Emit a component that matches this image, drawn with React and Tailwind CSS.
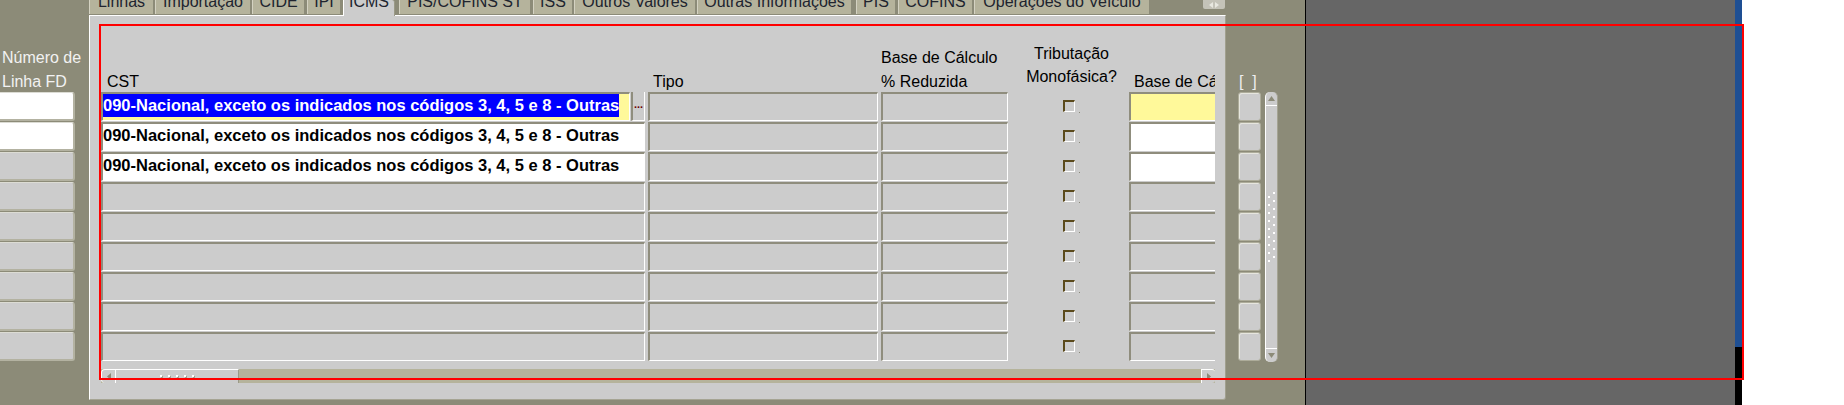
import React from 'react';

// Oracle Forms style ICMS tab, frozen as a screenshot

const tabs = [
  { label: 'Linhas', cls: 'w-[64px]' },
  { label: 'Importação', cls: 'w-[95px] ml-[2px]' },
  { label: 'CIDE', cls: 'w-[52px] ml-[2px]' },
  { label: 'IPI', cls: 'w-[33px] ml-[3px]' },
  { label: 'ICMS', cls: 'w-[52px] ml-[3px]', active: true },
  { label: 'PIS/COFINS ST', cls: 'w-[131px] ml-[4px]' },
  { label: 'ISS', cls: 'w-[39px] ml-[3px]' },
  { label: 'Outros Valores', cls: 'w-[121px] ml-[2px]' },
  { label: 'Outras Informações', cls: 'w-[154px] ml-[2px]' },
  { label: 'PIS', cls: 'w-[39px] ml-[5px]' },
  { label: 'COFINS', cls: 'w-[74px] ml-[3px]' },
  { label: 'Operações do Veículo', cls: 'w-[175px] ml-[2px]' },
];

const rows = [0, 1, 2, 3, 4, 5, 6, 7, 8];
const CST_TEXT = '090-Nacional, exceto os indicados nos códigos 3, 4, 5 e 8 - Outras';

function Field({ className = '', children }) {
  return (
    <div
      className={`h-[29px] shrink-0 overflow-hidden border-t-2 border-l-2 border-r border-b border-t-[#8f8d7d] border-l-[#8f8d7d] border-r-white border-b-white ${className}`}
    >
      {children}
    </div>
  );
}

function Checkbox() {
  return (
    <div className="relative ml-[55px] mt-[8px] h-[12px] w-[12px] border-t-2 border-l-2 border-r border-b border-t-[#5b4a1c] border-l-[#5b4a1c] border-r-white border-b-white">
      <div className="absolute left-[14px] top-[10px] h-px w-px bg-[#8a8a7a]" />
    </div>
  );
}

function Row({ i }) {
  const first = i === 0;
  const filled = i === 1 || i === 2;
  return (
    <div className="flex items-start">
      {first ? (
        <>
          <Field className="w-[529px] bg-[#fff99a]">
            <span className="inline-block bg-[#0000ff] font-bold text-[16.5px] leading-[23px] text-white whitespace-nowrap">
              {CST_TEXT}
            </span>
          </Field>
          <div className="ml-px flex h-[29px] w-[14px] shrink-0 items-center justify-center border-l-2 border-r border-b border-l-[#8f8d7d] border-r-white border-b-white bg-[#cccccc] text-[11px] font-bold leading-none text-[#6b0000]">
            <span className="-mt-[4px]">...</span>
          </div>
        </>
      ) : (
        <Field className={`w-[544px] ${filled ? 'bg-white' : 'bg-[#cccccc]'}`}>
          {filled && (
            <span className="inline-block font-bold text-[16.5px] leading-[23px] text-black whitespace-nowrap">
              {CST_TEXT}
            </span>
          )}
        </Field>
      )}
      <Field className="ml-[3px] w-[230px] bg-[#cccccc]" />
      <Field className="ml-[3px] w-[127px] bg-[#cccccc]" />
      <div className="h-[29px] w-[121px] shrink-0">
        <Checkbox />
      </div>
      <Field
        className={`w-[150px] ${first ? 'bg-[#fff99a]' : filled ? 'bg-white' : 'bg-[#cccccc]'}`}
      />
    </div>
  );
}

function GripDots({ cols, gap }) {
  const dots = [];
  for (let k = 0; k < 9; k++) {
    dots.push(<rect key={`a${k}`} x={cols[0]} y={4 + k * gap} width="2" height="2" fill="#ffffff" />);
    dots.push(<rect key={`b${k}`} x={cols[1]} y={k * gap} width="2" height="2" fill="#ffffff" />);
  }
  return dots;
}

export default function App() {
  return (
    <div className="relative flex h-[405px] w-[1844px] overflow-hidden bg-white font-['Liberation_Sans',Arial,sans-serif] text-[16px] text-black">
      {/* olive form canvas */}
      <div className="flex h-full w-[1305px] shrink-0 bg-[#8c8b78]">
        {/* left column: Número de Linha FD */}
        <div className="flex w-[89px] shrink-0 flex-col">
          <div className="h-[92px] whitespace-nowrap pl-[2px] pt-[46px] leading-[24px] text-[#f2f2f2]">
            <div>Número de</div>
            <div>Linha FD</div>
          </div>
          <div className="flex flex-col gap-px">
            {rows.map((i) => (
              <div
                key={i}
                className={`h-[29px] w-[75px] rounded-r-[3px] border-t border-r-2 border-b-2 border-t-[#dcdcd4] border-r-[#b3b2a1] border-b-[#b3b2a1] ${
                  i < 2 ? 'bg-white' : 'bg-[#cccccc]'
                }`}
              />
            ))}
          </div>
        </div>

        {/* tab canvas */}
        <div className="flex w-[1137px] shrink-0 flex-col">
          <div className="flex h-[15px] items-start">
            {tabs.map((t) =>
              t.active ? (
                <div
                  key={t.label}
                  className={`relative z-10 h-[16px] shrink-0 overflow-hidden rounded-tr-[3px] border-l border-r border-l-white border-r-[#9a9987] bg-[#cccccc] text-center text-[#20242f] ${t.cls}`}
                >
                  <span className="-mt-[6px] block whitespace-nowrap leading-[16px]">{t.label}</span>
                </div>
              ) : (
                <div
                  key={t.label}
                  className={`h-[14px] shrink-0 overflow-hidden border-l border-l-[#d4d2c2] bg-[#b5b39c] text-center text-[#20242f] ${t.cls}`}
                >
                  <span className="-mt-[6px] block whitespace-nowrap leading-[16px]">{t.label}</span>
                </div>
              )
            )}
            <div className="ml-[54px] flex h-[9px] w-[22px] shrink-0 items-center justify-center gap-[2px] rounded-b-[2px] bg-[#c4c3b8]">
              <svg width="4" height="6" viewBox="0 0 4 6">
                <path d="M4 0 L0 3 L4 6 Z" fill="#e8e8e0" />
              </svg>
              <svg width="4" height="6" viewBox="0 0 4 6">
                <path d="M0 0 L4 3 L0 6 Z" fill="#e8e8e0" />
              </svg>
            </div>
          </div>

          {/* panel */}
          <div className="flex h-[385px] flex-col rounded-br-[3px] border-t border-l border-r border-b border-t-white border-l-white border-r-[#a09f8e] border-b-[#a5a493] bg-[#cccccc]">
            {/* headers */}
            <div className="ml-[11px] flex h-[76px] w-[1114px] overflow-hidden whitespace-nowrap">
              <div className="w-[544px] shrink-0 pl-[6px] pt-[54px] leading-[24px]">CST</div>
              <div className="ml-[3px] w-[230px] shrink-0 pl-[5px] pt-[54px] leading-[24px]">Tipo</div>
              <div className="ml-[3px] w-[127px] shrink-0 pt-[30px] leading-[24px]">
                <div>Base de Cálculo</div>
                <div>% Reduzida</div>
              </div>
              <div className="w-[121px] shrink-0 pl-[6px] pt-[26px] text-center leading-[23px]">
                <div>Tributação</div>
                <div>Monofásica?</div>
              </div>
              <div className="w-[86px] shrink-0 overflow-hidden pl-[5px] pt-[54px] leading-[24px]">Base de Cálculo</div>
            </div>

            {/* rows */}
            <div className="ml-[11px] flex w-[1114px] flex-col gap-px overflow-hidden">
              {rows.map((i) => (
                <Row key={i} i={i} />
              ))}
            </div>

            {/* horizontal scrollbar */}
            <div className="ml-[11px] mt-[8px] flex h-[14px] w-[1114px] items-stretch bg-[#b5b39b]">
              <div className="flex w-[14px] items-center justify-center rounded-l-[4px] border-t border-l border-white bg-[#cccccc]">
                <svg width="4" height="7" viewBox="0 0 4 7">
                  <path d="M4 0 L0 3.5 L4 7 Z" fill="#8c8b78" />
                </svg>
              </div>
              <div className="flex w-[124px] items-center justify-center gap-[6px] border-t border-l border-r border-t-white border-l-white border-r-[#9a9987] bg-[#cccccc] pb-[2px]">
                {[0, 1, 2, 3, 4].map((d) => (
                  <div key={d} className="h-[2px] w-[2px] bg-white shadow-[1px_1px_0_#a0a090]" />
                ))}
              </div>
              <div className="flex-1" />
              <div className="flex w-[14px] items-center justify-center rounded-r-[3px] border-t border-l border-white bg-[#cccccc]">
                <svg width="4" height="7" viewBox="0 0 4 7">
                  <path d="M0 0 L4 3.5 L0 7 Z" fill="#8c8b78" />
                </svg>
              </div>
            </div>
          </div>
        </div>

        {/* right column: row buttons + vertical scrollbar */}
        <div className="flex w-[79px] shrink-0 flex-col">
          <div className="h-[92px] whitespace-pre pl-[13px] pt-[70px] leading-[24px] text-[#eeeeee]">[  ]</div>
          <div className="flex">
            <div className="ml-[12px] flex w-[23px] flex-col gap-px">
              {rows.map((i) => (
                <div
                  key={i}
                  className="h-[29px] rounded-[3px] border border-[#adac9a] bg-[#cccccc] shadow-[inset_1px_1px_0_#e6e6de]"
                />
              ))}
            </div>
            <div className="ml-[4px] flex h-[270px] w-[13px] flex-col rounded-t-[5px] rounded-b-[5px] border-l border-r border-l-white border-r-[#a5a493] bg-[#cccccc]">
              <div className="flex h-[14px] items-center justify-center border-b border-white">
                <svg width="7" height="5" viewBox="0 0 7 5">
                  <path d="M0 5 L3.5 0 L7 5 Z" fill="#8c8b78" />
                </svg>
              </div>
              <div className="flex flex-1 items-center justify-center">
                <svg width="11" height="70" viewBox="0 0 11 70">
                  <GripDots cols={[2, 7]} gap={8} />
                </svg>
              </div>
              <div className="flex h-[14px] items-center justify-center border-t border-white">
                <svg width="7" height="5" viewBox="0 0 7 5">
                  <path d="M0 0 L3.5 5 L7 0 Z" fill="#8c8b78" />
                </svg>
              </div>
            </div>
          </div>
        </div>
      </div>

      {/* divider + dark area */}
      <div className="h-full w-px shrink-0 bg-black" />
      <div className="h-full w-[429px] shrink-0 bg-[#666666]" />
      <div className="flex h-full w-[7px] shrink-0 flex-col">
        <div className="h-[347px] bg-[#1e4f93]" />
        <div className="flex-1 bg-black" />
      </div>
      <div className="h-full flex-1 bg-white" />

      {/* red highlight frame drawn over the screenshot */}
      <div className="pointer-events-none absolute left-[99px] top-[24px] h-[356px] w-[1645px] border-2 border-[#ff0000]" />
    </div>
  );
}
